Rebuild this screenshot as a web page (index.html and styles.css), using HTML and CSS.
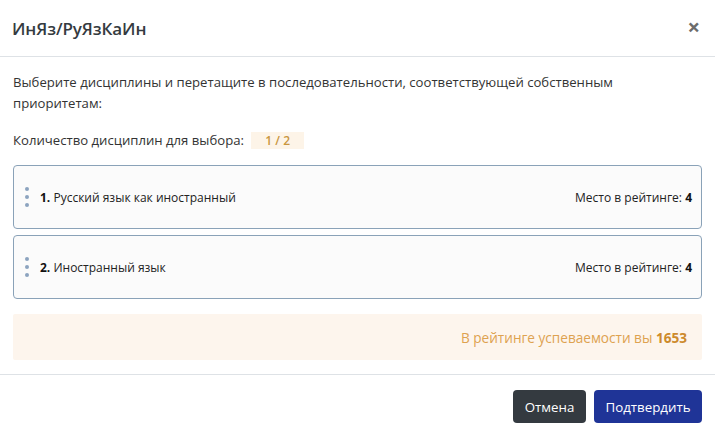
FILE: index.html
```html
<!DOCTYPE html>
<html lang="ru">
<head>
<meta charset="utf-8">
<link rel="stylesheet" href="styles.css">
</head>
<body>
<div class="modal">
  <div class="modal-header">
    <h5 class="modal-title">ИнЯз/РуЯзКаИн</h5>
    <button class="close" type="button">×</button>
  </div>
  <div class="modal-body">
    <p class="intro">Выберите дисциплины и перетащите в последовательности, соответствующей собственным приоритетам:</p>
    <div class="count">Количество дисциплин для выбора: <span class="badge">1 / 2</span></div>
    <div class="list">
      <div class="item">
        <span class="handle"><i></i><i></i><i></i></span>
        <span class="name"><b>1.</b> Русский язык как иностранный</span>
        <span class="place">Место в рейтинге: <b>4</b></span>
      </div>
      <div class="item">
        <span class="handle"><i></i><i></i><i></i></span>
        <span class="name"><b>2.</b> Иностранный язык</span>
        <span class="place">Место в рейтинге: <b>4</b></span>
      </div>
    </div>
    <div class="alert"><span>В рейтинге успеваемости вы <b>1653</b></span></div>
  </div>
  <div class="modal-footer">
    <button class="btn btn-dark" type="button">Отмена</button>
    <button class="btn btn-primary" type="button">Подтвердить</button>
  </div>
</div>
</body>
</html>
```
FILE: styles.css
```css
* { box-sizing: border-box; }
html, body { margin: 0; padding: 0; background: #fff; }
body {
  font-family: "Open Sans", "Noto Sans", sans-serif;
  color: #212529;
  width: 715px;
  height: 437px;
  overflow: hidden;
}
.modal {
  width: 715px;
  height: 437px;
  background: #fff;
  display: flex;
  flex-direction: column;
}
.modal-header {
  height: 57px;
  border-bottom: 1px solid #dee2e6;
  display: flex;
  align-items: center;
  justify-content: space-between;
  padding: 0 15px 0 12px;
}
.modal-title {
  margin: 0;
  font-size: 17px;
  font-weight: 600;
  color: #343a40;
  letter-spacing: -0.1px;
}
.close {
  border: 0;
  background: none;
  padding: 0;
  font-family: "Open Sans", sans-serif;
  font-size: 22px;
  font-weight: 700;
  color: #6c6c6c;
  line-height: 1;
  margin-top: -4px;
}
.modal-body {
  padding: 15px 13px 14px 13px;
  border-bottom: 1px solid #dee2e6;
}
.intro {
  margin: 0;
  font-size: 13.15px;
  line-height: 21px;
  color: #333;
  max-width: 690px;
}
.count {
  margin-top: 17px;
  font-size: 13.15px;
  line-height: 18px;
  color: #333;
}
.badge {
  display: inline-block;
  margin-left: 4px;
  padding: 0 14px;
  background: #fdf4e8;
  color: #c9963e;
  font-weight: 600;
  font-size: 12px;
  line-height: 17px;
}
.list {
  margin-top: 16px;
  display: flex;
  flex-direction: column;
  gap: 6px;
}
.item {
  height: 64px;
  border: 1px solid #8aa2b8;
  border-radius: 4px;
  background: #fbfbfb;
  display: flex;
  align-items: center;
  padding: 0 9px 0 11px;
  font-size: 12px;
  color: #222;
}
.handle {
  display: flex;
  flex-direction: column;
  gap: 4px;
  width: 4px;
  margin-right: 11px;
}
.handle i {
  display: block;
  width: 4px;
  height: 4px;
  border-radius: 50%;
  background: #8ca3bf;
}
.name { flex: 1; }
.name b, .place b { font-weight: 700; color: #111; }
.place { text-align: right; }
.alert {
  margin-top: 15px;
  height: 46px;
  background: #fdf5ed;
  border-radius: 2px;
  display: flex;
  align-items: center;
  justify-content: flex-end;
  padding: 0 15px;
  font-size: 13.6px;
  color: #dea250;
}
.alert b { color: #cd8a2c; font-weight: 700; }
.modal-footer {
  display: flex;
  justify-content: flex-end;
  gap: 8px;
  padding: 15px 13px 0 12px;
}
.btn {
  border: 0;
  border-radius: 4px;
  height: 33px;
  font-family: "Open Sans", sans-serif;
  font-size: 13.3px;
  color: #fff;
  padding: 0 10px;
}
.btn-dark { background: #343a40; width: 73px; }
.btn-primary { background: #1f3497; width: 108px; }
```
